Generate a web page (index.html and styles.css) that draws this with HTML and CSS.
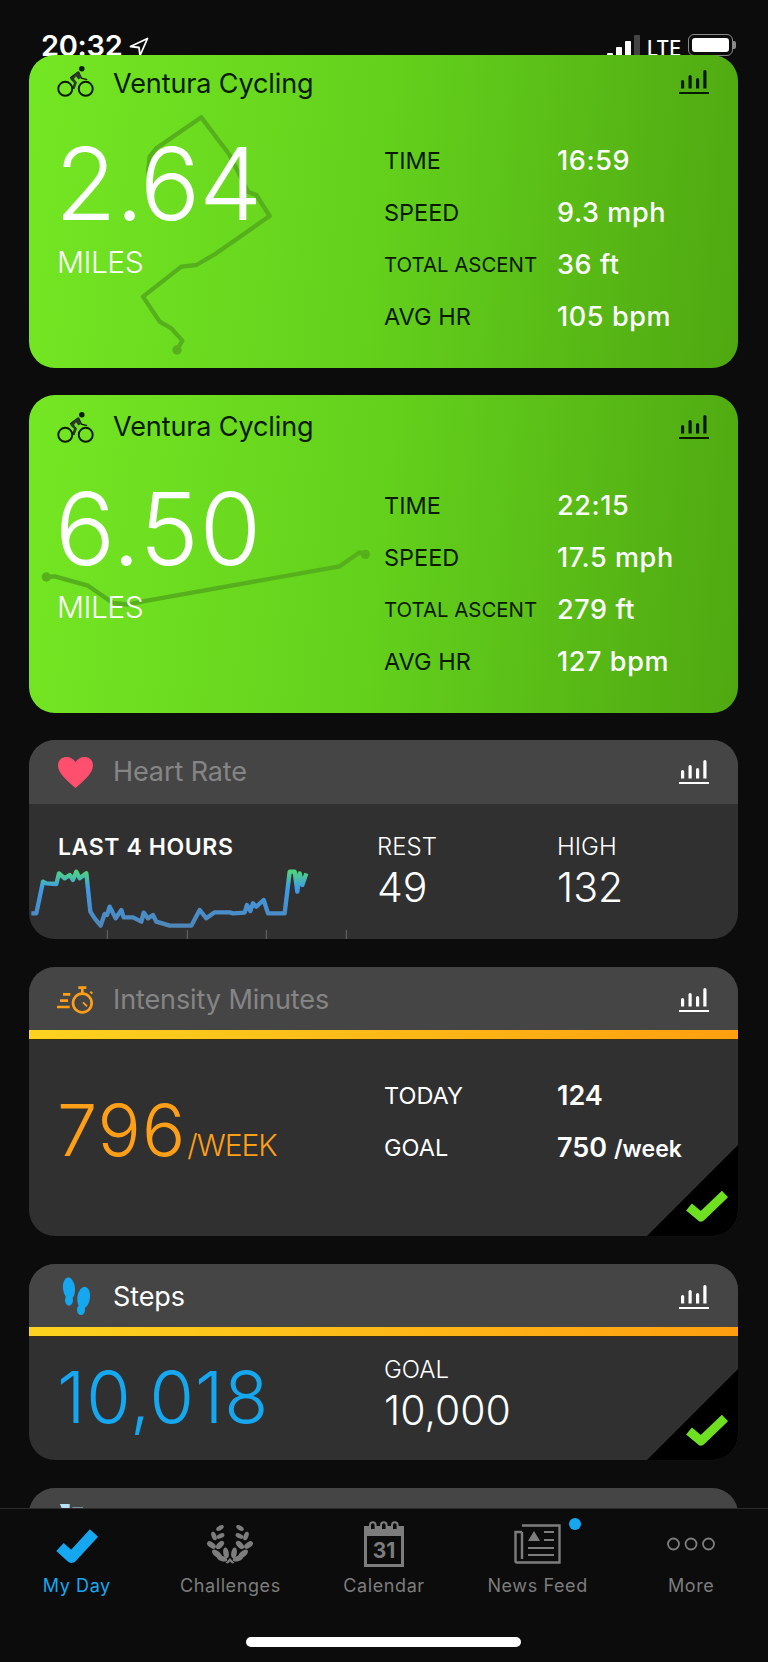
FILE: index.html
```html
<!DOCTYPE html>
<html lang="en">
<head>
    <meta charset="UTF-8">
    <meta name="viewport" content="width=device-width, initial-scale=1.0">
    <title>My Day</title>
    <link rel="stylesheet" href="styles.css">
</head>
<body>
    <svg class="defs" width="0" height="0">
        <symbol id="chart" viewBox="0 0 30 24">
            <path d="M2 18.500v-7a1.600 1.600 0 0 1 3.200 0v7zM9.500 18.500v-12a1.600 1.600 0 0 1 3.200 0v12zM17 18.500v-9a1.600 1.600 0 0 1 3.200 0v9zM24.300 18.500V1.600a1.600 1.600 0 0 1 3.200 0v16.900z" fill="currentColor"/>
            <rect x="0" y="22" width="30" height="2" fill="currentColor"/>
        </symbol>
        <symbol id="bike" viewBox="0 0 38 33">
            <circle cx="8.500" cy="24" r="7.200" fill="none" stroke="#0a1a00" stroke-width="2"/>
            <circle cx="29.500" cy="24" r="7.200" fill="none" stroke="#0a1a00" stroke-width="2"/>
            <circle cx="25.500" cy="3.500" r="2.800" fill="#0a1a00"/>
            <path d="M22 6.500l-8 6 4.500 4.500-2 7M22 6.500l3 6.500 6 1.500" fill="none" stroke="#0a1a00" stroke-width="1.400"/>
            <path d="M22 6l3 6.500-3 2-2.500-3.500-2 3 3 3.500-2.500 7-1.500-.5 1-6-4-4z" fill="#2c3a26"/>
        </symbol>
        <symbol id="check" viewBox="0 0 42 34">
            <path d="M3 17l12 10L39 4" fill="none" stroke="currentColor" stroke-width="9" stroke-linejoin="round"/>
        </symbol>
    </svg>

    <div class="screen">
        <div class="status">
            <span class="status-time">20:32</span>
            <svg class="status-arrow" viewBox="0 0 20 20"><path d="M18.500 1.500L1.500 9.500l8.500 1 1 8z" fill="none" stroke="#fff" stroke-width="1.800" stroke-linejoin="round"/></svg>
            <div class="status-right">
                <div class="signal">
                    <i class="signal-a"></i><i class="signal-b"></i><i class="signal-c"></i><i class="signal-d"></i>
                </div>
                <span class="status-lte">LTE</span>
                <div class="battery"><b></b></div>
                <div class="battery-nub"></div>
            </div>
        </div>

        <main class="feed">
            <section class="card card-green card-first">
                <svg class="route" viewBox="88 165 2127 939">
                    <path d="M445 520L450 470 470 445 605 352 690 465 745 575 770 585 810 648 650 760 590 795 545 800 430 890 480 965 515 985 548 1022 532 1050" fill="none" stroke="#55b01c" stroke-width="13" stroke-linejoin="round"/>
                    <circle cx="532" cy="1050" r="14" fill="#55b01c"/>
                </svg>
                <header class="card-head">
                    <svg class="head-icon"><use href="#bike"/></svg>
                    <h2 class="card-title">Ventura Cycling</h2>
                    <svg class="chart-icon"><use href="#chart"/></svg>
                </header>
                <div class="activity">
                    <div class="activity-main">
                        <div class="activity-num">2.64</div>
                        <div class="activity-unit">MILES</div>
                    </div>
                    <dl class="stats">
                        <dt>TIME</dt><dd>16:59</dd>
                        <dt>SPEED</dt><dd>9.3 mph</dd>
                        <dt class="small">TOTAL ASCENT</dt><dd>36 ft</dd>
                        <dt>AVG HR</dt><dd>105 bpm</dd>
                    </dl>
                </div>
            </section>

            <section class="card card-green">
                <svg class="route" viewBox="88 46 2127 954">
                    <path d="M140 592L165 590 265 618 340 670 385 675 430 665 1020 560 1080 518 1097 524" fill="none" stroke="#55b01c" stroke-width="13" stroke-linejoin="round"/>
                    <circle cx="140" cy="592" r="14" fill="#55b01c"/>
                    <circle cx="1097" cy="524" r="14" fill="#55b01c"/>
                </svg>
                <header class="card-head">
                    <svg class="head-icon"><use href="#bike"/></svg>
                    <h2 class="card-title">Ventura Cycling</h2>
                    <svg class="chart-icon"><use href="#chart"/></svg>
                </header>
                <div class="activity">
                    <div class="activity-main">
                        <div class="activity-num wide">6.50</div>
                        <div class="activity-unit">MILES</div>
                    </div>
                    <dl class="stats">
                        <dt>TIME</dt><dd>22:15</dd>
                        <dt>SPEED</dt><dd>17.5 mph</dd>
                        <dt class="small">TOTAL ASCENT</dt><dd>279 ft</dd>
                        <dt>AVG HR</dt><dd>127 bpm</dd>
                    </dl>
                </div>
            </section>

            <section class="card card-dark">
                <header class="card-head">
                    <svg class="head-icon" viewBox="0 0 37 33"><path d="M18.500 32C12 26 1 18 1 9.500 1 4 5 1 9.500 1c4 0 7 2 9 5 2-3 5-5 9-5C32 1 36 4 36 9.500 36 18 25 26 18.500 32z" fill="#ff4f6e"/></svg>
                    <h2 class="card-title muted">Heart Rate</h2>
                    <svg class="chart-icon"><use href="#chart"/></svg>
                </header>
                <div class="heart-body">
                    <svg class="heart-graph" viewBox="88 222 2127 405">
                        <defs>
                            <linearGradient id="hr" gradientUnits="userSpaceOnUse" x1="0" y1="425" x2="0" y2="590">
                                <stop offset="0" stop-color="#4fd37f"/>
                                <stop offset="0.3" stop-color="#3f9be8"/>
                                <stop offset="1" stop-color="#4f86b8"/>
                            </linearGradient>
                        </defs>
                        <path d="M323 600v27M563 600v27M800 600v27M1040 600v27" stroke="#6a6a6a" stroke-width="3"/>
                        <path d="M95 550L110 550 130 455 140 460 170 462 178 430 195 445 210 435 220 450 230 425 240 445 260 430 272 545 285 565 303 587 315 552 322 555 330 530 348 565 365 540 372 562 400 562 425 575 432 548 445 565 460 555 470 575 510 587 575 587 600 540 620 565 645 547 690 547 700 550 735 548 742 525 752 543 760 520 770 530 792 510 805 550 855 550 870 425 885 425 893 485 900 430 908 465 920 430" fill="none" stroke="url(#hr)" stroke-width="13" stroke-linejoin="round"/>
                    </svg>
                    <div class="heart-col">
                        <div class="heart-last">LAST 4 HOURS</div>
                    </div>
                    <div class="heart-col">
                        <div class="label">REST</div>
                        <div class="value-md">49</div>
                    </div>
                    <div class="heart-col">
                        <div class="label">HIGH</div>
                        <div class="value-md">132</div>
                    </div>
                </div>
            </section>

            <section class="card card-dark card-goal">
                <header class="card-head">
                    <svg class="head-icon" viewBox="172 72 111 87">
                        <g fill="none" stroke="#ff9f17" stroke-width="8">
                            <circle cx="248" cy="126" r="28"/>
                            <path d="M236 80h24M248 80v16M190 100h22M181 119h24M172 138h38"/>
                            <path d="M250 124l12 12" stroke-width="6"/>
                            <path d="M272 92l6 6" stroke-width="6"/>
                        </g>
                    </svg>
                    <h2 class="card-title muted">Intensity Minutes</h2>
                    <svg class="chart-icon"><use href="#chart"/></svg>
                </header>
                <div class="progress"></div>
                <div class="goal-body goal-intensity">
                    <div class="goal-main">
                        <span class="goal-num orange">796</span><span class="goal-unit orange">/WEEK</span>
                    </div>
                    <dl class="stats">
                        <dt>TODAY</dt><dd class="bold">124</dd>
                        <dt>GOAL</dt><dd class="bold">750 <small>/week</small></dd>
                    </dl>
                    <div class="corner"><svg class="corner-check"><use href="#check"/></svg></div>
                </div>
            </section>

            <section class="card card-dark card-goal">
                <header class="card-head">
                    <svg class="head-icon head-icon-tall" viewBox="170 78 111 117">
                        <g fill="#15a8f0">
                            <ellipse cx="206" cy="112" rx="18" ry="33" transform="rotate(-6 206 112)"/>
                            <ellipse cx="206" cy="148" rx="12" ry="16"/>
                            <ellipse cx="250" cy="140" rx="19" ry="33" transform="rotate(8 250 140)"/>
                            <ellipse cx="242" cy="176" rx="12" ry="16"/>
                        </g>
                    </svg>
                    <h2 class="card-title">Steps</h2>
                    <svg class="chart-icon"><use href="#chart"/></svg>
                </header>
                <div class="progress"></div>
                <div class="goal-body goal-steps">
                    <div class="goal-main">
                        <span class="goal-num blue">10,018</span>
                    </div>
                    <div class="goal-side">
                        <div class="label">GOAL</div>
                        <div class="value-md">10,000</div>
                    </div>
                    <div class="corner"><svg class="corner-check"><use href="#check"/></svg></div>
                </div>
            </section>

            <section class="card card-dark card-cut">
                <header class="card-head">
                    <svg class="head-icon" viewBox="0 0 37 37"><path d="M1 0h11v7H4zM15 4h12v3H15z" fill="#b8e0f5"/></svg>
                </header>
            </section>
        </main>

        <nav class="tabs">
            <a class="tab tab-active">
                <svg class="tab-icon" viewBox="0 0 44 38" width="44" height="38"><path d="M5 21l11.500 10.500L39 7" fill="none" stroke="currentColor" stroke-width="11" stroke-linejoin="round"/></svg>
                <span>My Day</span>
            </a>
            <a class="tab">
                <svg class="tab-icon" viewBox="0 0 46 39" width="46" height="39">
                    <g id="laurel" fill="currentColor">
                        <ellipse cx="13" cy="3" rx="4.200" ry="2.200" transform="rotate(-30 13 3)"/>
                        <ellipse cx="7" cy="11" rx="2.400" ry="4.500" transform="rotate(-20 7 11)"/>
                        <ellipse cx="13.500" cy="11" rx="4.200" ry="2.300" transform="rotate(-25 13.500 11)"/>
                        <ellipse cx="4.500" cy="20" rx="5" ry="2.800" transform="rotate(35 4.500 20)"/>
                        <ellipse cx="13" cy="20" rx="5" ry="2.800" transform="rotate(-45 13 20)"/>
                        <ellipse cx="10" cy="29" rx="6" ry="3" transform="rotate(40 10 29)"/>
                        <ellipse cx="19" cy="28" rx="2.800" ry="5.500" transform="rotate(-10 19 28)"/>
                        <ellipse cx="15" cy="33.500" rx="5.500" ry="2.600" transform="rotate(20 15 33.500)"/>
                    </g>
                    <use href="#laurel" transform="matrix(-1 0 0 1 46 0)"/>
                    <path d="M23 33l-4.500 5 2.500.5 2-2 2 2 2.500-.5z" fill="currentColor"/>
                </svg>
                <span>Challenges</span>
            </a>
            <a class="tab">
                <svg class="tab-icon tab-icon-cal" viewBox="0 0 40 46" width="40" height="46">
                    <path d="M0 5h40v41H0z" fill="currentColor"/>
                    <path d="M3 15h34v28H3z" fill="#0c0c0c"/>
                    <g fill="#0c0c0c" stroke="currentColor" stroke-width="2">
                        <path d="M6 9V4a2.800 2.800 0 0 1 5.600 0v5z"/>
                        <path d="M17 9V4a2.800 2.800 0 0 1 5.600 0v5z"/>
                        <path d="M28 9V4a2.800 2.800 0 0 1 5.600 0v5z"/>
                    </g>
                    <text class="cal-day" x="20" y="37" text-anchor="middle">31</text>
                </svg>
                <span>Calendar</span>
            </a>
            <a class="tab">
                <svg class="tab-icon" viewBox="0 0 47 40" width="47" height="40">
                    <path d="M8 1.500h37.500v37H3a1.500 1.500 0 0 1-1.500-1.500V8H8M8 8v27" fill="none" stroke="currentColor" stroke-width="2.400"/>
                    <path d="M14 17l6-10 6 10z" fill="currentColor"/>
                    <path d="M30 8h10M30 16h10M14 24h26M14 31h26" stroke="currentColor" stroke-width="2"/>
                </svg>
                <i class="tab-dot"></i>
                <span>News Feed</span>
            </a>
            <a class="tab">
                <svg class="tab-icon" viewBox="0 0 48 40" width="48" height="40">
                    <g fill="none" stroke="currentColor" stroke-width="1.800">
                        <circle cx="6.500" cy="20" r="5.500"/>
                        <circle cx="24" cy="20" r="5.500"/>
                        <circle cx="41.500" cy="20" r="5.500"/>
                    </g>
                </svg>
                <span>More</span>
            </a>
        </nav>
        <div class="home-bar"></div>
    </div>
</body>
</html>
```

FILE: styles.css
```css
* {
    box-sizing: border-box;
}
body {
    margin: 0;
    background-color: #0c0c0c;
    color: #fff;
    font-family: 'Inter', 'Liberation Sans', sans-serif;
}
h2, dl, dd {
    margin: 0;
}
.defs {
    position: absolute;
}
.screen {
    position: relative;
    width: 768px;
    height: 1662px;
    display: flex;
    flex-direction: column;
    overflow: hidden;
    background-color: #0c0c0c;
}

/* status bar sits behind the scrolled cards */
.status {
    position: absolute;
    top: 30px;
    left: 41px;
    right: 32px;
    height: 36px;
    display: flex;
    align-items: flex-start;
}
.status-time {
    font-size: 29px;
    line-height: 32px;
    font-weight: 600;
    letter-spacing: -0.3px;
}
.status-arrow {
    width: 20px;
    height: 20px;
    margin: 7px 0 0 7px;
}
.status-right {
    margin-left: auto;
    display: flex;
    align-items: flex-start;
}
.signal {
    display: flex;
    align-items: flex-end;
    gap: 3px;
    height: 27px;
    margin-top: 5px;
}
.signal i {
    width: 6px;
    background-color: #fff;
    border-radius: 1px;
}
.signal-a { height: 9px; }
.signal-b { height: 15px; }
.signal-c { height: 21px; }
.signal .signal-d { height: 27px; background-color: #444; }
.status-lte {
    margin-left: 7px;
    font-size: 22px;
    line-height: 36px;
    font-weight: 500;
    transform: scaleX(0.9);
    transform-origin: left;
}
.battery {
    margin: 4px 0 0 3px;
    width: 45px;
    height: 22px;
    padding: 3px;
    border: 1.500px solid #8a8a8a;
    border-radius: 6px;
}
.battery b {
    display: block;
    width: 100%;
    height: 100%;
    background-color: #fff;
    border-radius: 3px;
}
.battery-nub {
    width: 3px;
    height: 8px;
    margin-top: 11px;
    background-color: #8a8a8a;
    border-radius: 0 2px 2px 0;
}

/* card list */
.feed {
    position: relative;
    flex: 1;
    min-height: 0;
    padding: 55px 30px 0 29px;
    display: flex;
    flex-direction: column;
    gap: 27px;
    overflow: hidden;
}
.card {
    position: relative;
    flex: none;
    border-radius: 26px;
    overflow: hidden;
}
.card-head {
    position: relative;
    height: 64px;
    padding: 0 29px 0 28px;
    display: flex;
    align-items: center;
}
.head-icon {
    width: 37px;
    height: 33px;
    margin-right: 19px;
    flex: none;
}
.head-icon-tall {
    height: 39px;
}
.card-title {
    font-size: 27px;
    line-height: 32px;
    font-weight: 400;
    letter-spacing: -0.1px;
}
.card-title.muted {
    color: #858585;
}
.chart-icon {
    width: 30px;
    height: 24px;
    margin-left: auto;
    color: #fff;
}

/* green activity cards */
.card-green {
    height: 318px;
    color: #0a1a00;
    background: linear-gradient(96deg, #74e723 0%, #63d01c 50%, #4fa811 100%);
}
.card-first {
    height: 313px;
}
.card-first .card-head {
    height: 57px;
}
.card-first .head-icon {
    margin-top: -5px;
}
.card-first .chart-icon {
    margin-top: -3px;
}
.card-first .activity {
    padding-top: 22px;
}
.card-green .chart-icon {
    color: #0a1a00;
}
.route {
    position: absolute;
    top: 0;
    left: 0;
    width: 100%;
    height: 100%;
}
.activity {
    position: relative;
    display: flex;
    padding-top: 20px;
}
.activity-main {
    width: 355px;
    padding-left: 26px;
    color: #fff;
}
.activity-num {
    font-size: 100px;
    line-height: 100px;
    font-weight: 300;
    letter-spacing: -1px;
}
.activity-num.wide {
    letter-spacing: 0.5px;
}
.activity-unit {
    margin-top: 13px;
    margin-left: 2px;
    font-size: 30px;
    line-height: 30px;
    font-weight: 300;
    letter-spacing: -0.5px;
}
.stats {
    display: grid;
    grid-template-columns: 173px auto;
    grid-auto-rows: 52px;
    align-items: center;
    font-size: 23.500px;
}
.stats dd {
    color: #fff;
    font-size: 27px;
    font-weight: 500;
    letter-spacing: 0.6px;
}
.stats .small {
    font-size: 20.400px;
}
.stats .bold {
    font-weight: 600;
    letter-spacing: 0;
}
.stats small {
    font-size: 23px;
}

/* dark cards */
.card-dark {
    background-color: #303030;
}
.card-dark + .card-dark {
    margin-top: 1px;
}
.card-dark .card-head {
    background-color: #454545;
}
.card-goal .card-head {
    height: 63px;
    padding-top: 2px;
}
.card-cut {
    height: 100px;
}
.label {
    font-size: 24px;
    line-height: 24px;
    font-weight: 300;
}
.value-md {
    margin-top: 6px;
    font-size: 41px;
    line-height: 44px;
    font-weight: 300;
}
.heart-body {
    position: relative;
    height: 135px;
    padding-top: 31px;
    display: grid;
    grid-template-columns: 348px 180px 1fr;
}
.heart-col {
    position: relative;
}
.heart-last {
    padding-left: 29px;
    font-size: 23px;
    line-height: 24px;
    font-weight: 600;
    letter-spacing: 0.6px;
}
.heart-graph {
    position: absolute;
    top: 0;
    left: 0;
    width: 100%;
    height: 100%;
}
.progress {
    height: 9px;
    background: linear-gradient(90deg, #fdd31f, #ff9f10);
    box-shadow: 0 1px 0 #3d2f10;
}
.goal-body {
    position: relative;
    display: flex;
}
.goal-intensity {
    height: 197px;
    padding-top: 30px;
}
.goal-steps {
    height: 124px;
}
.goal-main {
    width: 355px;
    padding-left: 28px;
    padding-top: 21px;
}
.goal-num {
    font-size: 72px;
    line-height: 80px;
    font-weight: 300;
    letter-spacing: 1px;
}
.goal-unit {
    margin-left: 1px;
    font-size: 30px;
    font-weight: 300;
    letter-spacing: -1px;
}
.goal-side {
    padding-top: 22px;
}
.orange {
    color: #ff9f17;
}
.blue {
    color: #15a8f0;
}
.corner {
    position: absolute;
    right: 0;
    bottom: 0;
    width: 91px;
    height: 91px;
    background-color: #000;
    clip-path: polygon(100% 0, 100% 100%, 0 100%);
}
.corner-check {
    position: absolute;
    right: 10px;
    bottom: 12px;
    width: 42px;
    height: 34px;
    color: #6fe021;
}

/* bottom tabs */
.tabs {
    position: relative;
    flex: none;
    height: 154px;
    display: grid;
    grid-template-columns: repeat(5, 1fr);
    background-color: #0c0c0c;
    border-top: 1px solid #2b2b2b;
}
.tab {
    position: relative;
    height: 89px;
    display: flex;
    flex-direction: column;
    align-items: center;
    justify-content: flex-end;
    color: #7d7d7d;
    font-size: 18px;
    line-height: 24px;
    letter-spacing: 0.6px;
}
.tab-active {
    color: #15a8f0;
}
.tab-icon {
    margin-bottom: 10px;
}
.tab-icon-cal {
    margin-bottom: 7px;
}
.tab-dot {
    position: absolute;
    top: 9px;
    left: 108px;
    width: 12px;
    height: 12px;
    border-radius: 50%;
    background-color: #15a8f0;
}
.cal-day {
    font-family: 'Inter', sans-serif;
    font-size: 21px;
    font-weight: 700;
    fill: currentColor;
    letter-spacing: 0;
}
.home-bar {
    position: absolute;
    left: 246px;
    bottom: 15px;
    width: 275px;
    height: 10px;
    border-radius: 5px;
    background-color: #fff;
}
```
